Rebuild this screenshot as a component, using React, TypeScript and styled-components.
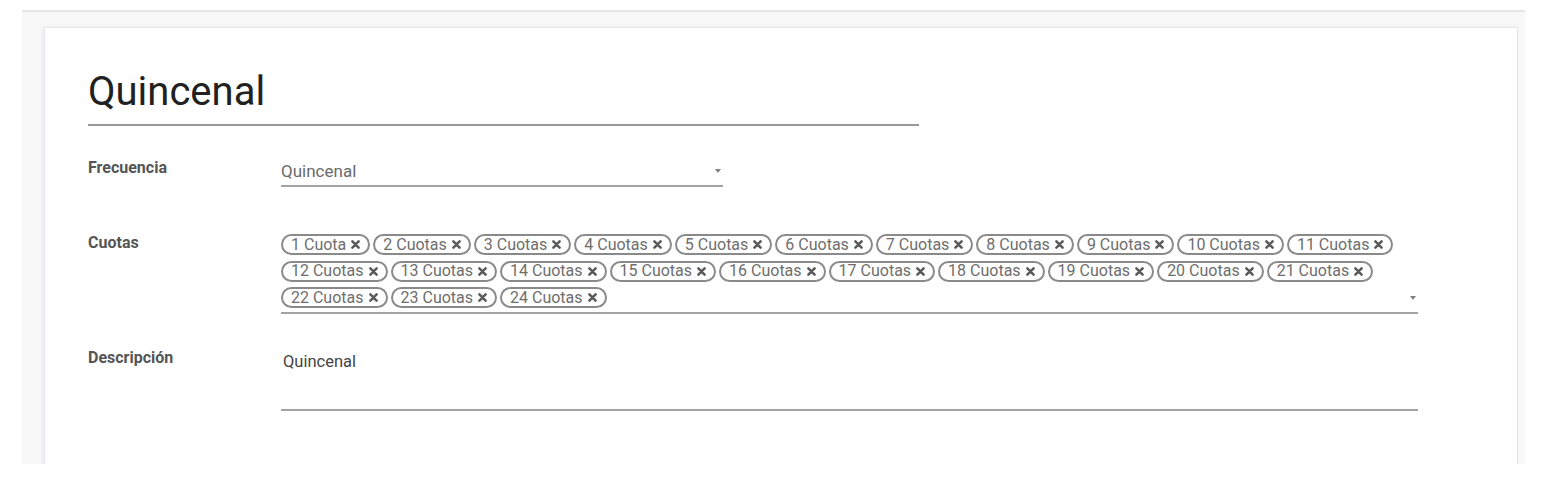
import * as React from "react";
import styled, { createGlobalStyle } from "styled-components";

const GlobalStyle = createGlobalStyle`
  html, body {
    margin: 0;
    padding: 0;
    background: #ffffff;
  }
  body {
    font-family: Roboto, "Liberation Sans", Arial, sans-serif;
  }
`;

const cuotas = Array.from({ length: 24 }, (_, i) =>
  i === 0 ? "1 Cuota" : `${i + 1} Cuotas`
);

const Page = styled.div`
  padding: 10px 29px 0 22px;
`;

const Frame = styled.div`
  height: 454px;
  box-sizing: border-box;
  overflow: hidden;
  background: #f8f8f8;
  border-top: 2px solid #e6e6e6;
  padding: 15px 7px 0 22px;
`;

const Card = styled.section`
  background: #ffffff;
  border: 1px solid #e3e6ea;
  box-shadow: -2px 0 4px rgba(0, 0, 0, 0.05);
  padding: 40px 99px 80px 43px;
  min-height: 500px;
`;

const Title = styled.h1`
  margin: 0;
  width: 831px;
  padding-bottom: 8px;
  border-bottom: 2px solid #999999;
  font: 400 40px/48px Roboto, "Liberation Sans", sans-serif;
  color: #212121;
`;

const FormRow = styled.div<{ $top: number }>`
  display: grid;
  grid-template-columns: 193px 1fr;
  align-items: start;
  margin-top: ${(p) => p.$top}px;
`;

const Label = styled.label`
  padding-top: 2px;
  font: 700 16px/20px Roboto, "Liberation Sans", sans-serif;
  color: #555555;
`;

const Field = styled.div<{ $width?: number }>`
  position: relative;
  box-sizing: border-box;
  width: ${(p) => (p.$width ? `${p.$width}px` : "100%")};
  border-bottom: 2px solid #a3a3a3;
`;

const SelectValue = styled.div`
  height: 29px;
  display: flex;
  align-items: center;
  font: 400 17px/20px Roboto, "Liberation Sans", sans-serif;
  color: #6a6a6a;
`;

const Caret = styled.span`
  position: absolute;
  right: 2px;
  bottom: 12px;
  width: 0;
  height: 0;
  border-left: 3px solid transparent;
  border-right: 3px solid transparent;
  border-top: 4px solid #808080;
`;

const ChipList = styled.div`
  display: flex;
  flex-wrap: wrap;
  column-gap: 3px;
  row-gap: 5.5px;
  padding: 3px 20px 4px 0;
`;

const Chip = styled.span`
  display: inline-flex;
  align-items: center;
  gap: 5px;
  box-sizing: border-box;
  height: 21px;
  padding: 0 8px;
  border: 2px solid #8a8a8a;
  border-radius: 11px;
  font: 400 16px/16px Roboto, "Liberation Sans", sans-serif;
  color: #6e6e6e;
  white-space: nowrap;
`;

const Remove = styled.svg`
  width: 9px;
  height: 9px;
  flex: none;
`;

const TextValue = styled.div`
  min-height: 63px;
  box-sizing: border-box;
  padding: 6px 2px 0;
  font: 400 16.5px/20px Roboto, "Liberation Sans", sans-serif;
  color: #444444;
`;

const CloseIcon = () => (
  <Remove viewBox="0 0 9 9" aria-hidden="true">
    <path
      d="M1.4 1.4 L7.6 7.6 M7.6 1.4 L1.4 7.6"
      stroke="#5a5a5a"
      strokeWidth="2.5"
      strokeLinecap="round"
    />
  </Remove>
);

export default function App() {
  return (
    <>
      <GlobalStyle />
      <Page>
        <Frame>
          <Card>
            <Title>Quincenal</Title>

            <FormRow $top={30}>
              <Label>Frecuencia</Label>
              <Field $width={442}>
                <SelectValue>Quincenal</SelectValue>
                <Caret />
              </Field>
            </FormRow>

            <FormRow $top={44}>
              <Label>Cuotas</Label>
              <Field>
                <ChipList>
                  {cuotas.map((c) => (
                    <Chip key={c}>
                      {c}
                      <CloseIcon />
                    </Chip>
                  ))}
                </ChipList>
                <Caret />
              </Field>
            </FormRow>

            <FormRow $top={32}>
              <Label>Descripción</Label>
              <Field>
                <TextValue>Quincenal</TextValue>
              </Field>
            </FormRow>
          </Card>
        </Frame>
      </Page>
    </>
  );
}
